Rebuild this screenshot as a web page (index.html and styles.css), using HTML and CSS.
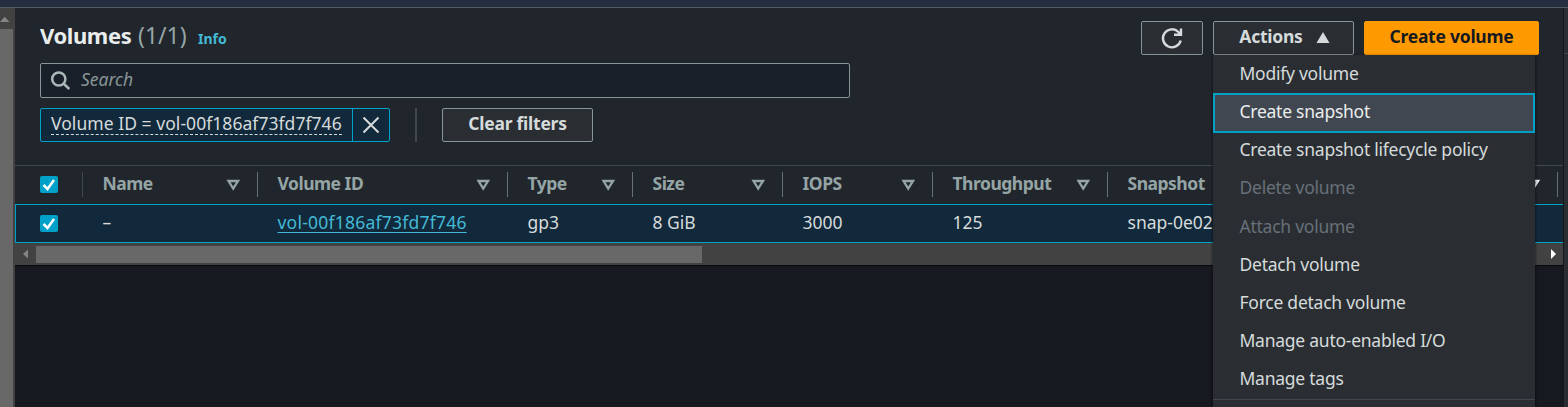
FILE: index.html
```html
<!DOCTYPE html>
<html lang="en">
<head>
<meta charset="utf-8">
<title>Volumes</title>
<link rel="stylesheet" href="styles.css">
</head>
<body>
<div class="topbar"></div>
<div class="app">
  <div class="vscroll">
    <svg class="vscroll-arrow" viewBox="0 0 13 21"><path d="M0 14h9.500L4.700 8.800z"/></svg>
    <div class="vscroll-thumb"></div>
  </div>
  <main class="panel">
    <section class="container">
      <header class="head">
        <h1 class="title"><span class="title-text">Volumes</span><span class="count">(1/1)</span><a class="info">Info</a></h1>
        <div class="buttons">
          <button class="btn refresh"><svg viewBox="0 0 24 24" width="24" height="24"><path d="M20.700 14.500A9 9 0 1 1 18.400 6L20.500 8.500M21 2.500V8.800H14" /></svg></button>
          <div class="dropdown">
            <button class="btn actions"><span>Actions</span><svg viewBox="0 0 14 12" width="14" height="12"><path d="M7 0L13.500 11H.5z"/></svg></button>
            <div class="menu">
              <div class="item">Modify volume</div>
              <div class="item active">Create snapshot</div>
              <div class="item">Create snapshot lifecycle policy</div>
              <div class="item disabled">Delete volume</div>
              <div class="item disabled">Attach volume</div>
              <div class="item">Detach volume</div>
              <div class="item">Force detach volume</div>
              <div class="item">Manage auto-enabled I/O</div>
              <div class="item">Manage tags</div>
              <div class="menu-rule"></div>
            </div>
          </div>
          <button class="btn primary"><span>Create volume</span></button>
        </div>
      </header>
      <div class="search">
        <svg viewBox="0 0 20 20" width="20" height="20"><circle cx="7.800" cy="8" r="6.600"/><path d="M12.500 12.500l5.800 5.500"/></svg>
        <span>Search</span>
      </div>
      <div class="filters">
        <div class="token">
          <div class="token-label"><span>Volume ID = vol-00f186af73fd7f746</span></div>
          <div class="token-close"><svg viewBox="0 0 18 18" width="18" height="18"><path d="M1.500 1.500l15 15M16.500 1.500l-15 15"/></svg></div>
        </div>
        <div class="divider"></div>
        <button class="btn clear"><span>Clear filters</span></button>
      </div>
      <div class="table">
        <div class="row header">
          <div class="cell check"><svg class="box" viewBox="0 0 18 17"><path d="M3.500 9l4 4L14 4"/></svg></div>
          <div class="cell dim"><span>Name</span><svg class="sort" viewBox="0 0 14 12"><path d="M2.500 2h9.500L7.200 9.600z"/></svg></div>
          <div class="cell"><span>Volume ID</span><svg class="sort" viewBox="0 0 14 12"><path d="M2.500 2h9.500L7.200 9.600z"/></svg></div>
          <div class="cell"><span>Type</span><svg class="sort" viewBox="0 0 14 12"><path d="M2.500 2h9.500L7.200 9.600z"/></svg></div>
          <div class="cell"><span>Size</span><svg class="sort" viewBox="0 0 14 12"><path d="M2.500 2h9.500L7.200 9.600z"/></svg></div>
          <div class="cell"><span>IOPS</span><svg class="sort" viewBox="0 0 14 12"><path d="M2.500 2h9.500L7.200 9.600z"/></svg></div>
          <div class="cell"><span>Throughput</span><svg class="sort" viewBox="0 0 14 12"><path d="M2.500 2h9.500L7.200 9.600z"/></svg></div>
          <div class="cell"><span>Snapshot</span><svg class="sort lit" viewBox="0 0 14 12"><path d="M2.500 2h9.500L7.200 9.600z"/></svg></div>
          <div class="cell"></div>
        </div>
        <div class="row body">
          <div class="cell check"><svg class="box" viewBox="0 0 18 17"><path d="M3.500 9l4 4L14 4"/></svg></div>
          <div class="cell"><span>–</span></div>
          <div class="cell"><a class="link">vol-00f186af73fd7f746</a></div>
          <div class="cell"><span>gp3</span></div>
          <div class="cell"><span>8 GiB</span></div>
          <div class="cell"><span>3000</span></div>
          <div class="cell"><span>125</span></div>
          <div class="cell"><span>snap-0e02c</span></div>
          <div class="cell"></div>
        </div>
      </div>
      <div class="hscroll">
        <svg viewBox="0 0 20 22" width="21" height="22"><path d="M12.500 6.500v9L7.500 11z"/></svg>
        <div class="hscroll-thumb"></div>
        <svg class="right" viewBox="0 0 20 22" width="20" height="22"><path d="M8 6v10l5-5z"/></svg>
      </div>
    </section>
  </main>
  <aside class="side"></aside>
</div>
</body>
</html>
```
FILE: styles.css
```css
* { box-sizing: border-box; }
body {
  margin: 0;
  width: 1568px;
  height: 407px;
  overflow: hidden;
  display: flex;
  flex-direction: column;
  background: #16191f;
  color: #d5dbdb;
  font: 17.5px/22px "Noto Sans", sans-serif;
}
svg { display: block; flex: none; }
span, a { white-space: nowrap; }
.topbar { height: 8px; flex: none; background: #232f3e; border-bottom: 1px solid #545b64; }
.app { flex: 1; display: flex; min-height: 0; }

.vscroll { width: 15px; flex: none; background: #424242; display: flex; flex-direction: column; }
.vscroll-arrow { width: 13px; height: 21px; fill: #858585; }
.vscroll-thumb { width: 13px; flex: 1; background: #686868; }

.panel { width: 1549px; flex: none; border-right: 1px solid #14171c; }
.container { height: 258px; background: #21252c; border-bottom: 1px solid #08090c; }
.head { height: 55px; padding: 13px 24px 0 25px; display: flex; justify-content: space-between; }
.title { margin: 1px 0 0; font-size: 22px; line-height: 26px; display: flex; align-items: baseline; }
.title-text { width: 98px; color: #eaeded; letter-spacing: -0.4px; }
.count { width: 60px; font-size: 23px; font-weight: 400; color: #95a5a6; }
.info { font-size: 14px; color: #44b9d6; }

.buttons { display: flex; gap: 10px; }
.btn {
  height: 34px;
  padding: 0;
  display: flex;
  align-items: center;
  justify-content: center;
  border: 1px solid #879596;
  border-radius: 2px;
  background: #2a2e33;
  color: #d5dbdb;
  font: bold 17.5px/20px "Noto Sans", sans-serif;
  letter-spacing: -0.25px;
}
.btn span { position: relative; top: -2px; }
.refresh { width: 62px; }
.refresh svg { fill: none; stroke: #d5dbdb; stroke-width: 2.400; }
.dropdown { position: relative; }
.actions { width: 141px; gap: 13px; padding-left: 2px; }
.actions svg { fill: #d5dbdb; }
.primary { width: 175px; border-color: #ff9900; background: #ff9900; color: #16191f; }

.menu {
  position: absolute;
  z-index: 2;
  left: 0;
  top: 34px;
  width: 322px;
  height: 360px;
  padding-top: 1px;
  background: #2a2e33;
  box-shadow: 0 1px 2px 1px rgba(0, 0, 0, .4);
  letter-spacing: -0.25px;
}
.item { height: 38.200px; line-height: 35px; padding-left: 26.500px; white-space: nowrap; }
.item.active {
  height: 40px;
  margin: -1px 0;
  padding-left: 24.500px;
  line-height: 33px;
  border: 2px solid #00a1c9;
  background: #414750;
  color: #eaeded;
}
.item.disabled { color: #687078; }
.menu-rule { margin-top: -1px; border-top: 1px solid #414750; }

.search {
  width: 810px;
  height: 35px;
  margin-left: 25px;
  padding-left: 10px;
  display: flex;
  align-items: center;
  gap: 10px;
  border: 1px solid #879596;
  border-radius: 2px;
  background: #1a2029;
  color: #879596;
  font-style: italic;
}
.search svg { fill: none; stroke: #aab7b8; stroke-width: 2.500; }
.search span { position: relative; top: -2px; }
.filters { height: 67px; padding: 10px 0 0 25px; display: flex; align-items: flex-start; }
.token { width: 350px; height: 34px; display: flex; border: 1px solid #00a1c9; border-radius: 2px; background: #12293b; }
.token-label { width: 312px; padding-left: 10px; border-right: 1px solid #00a1c9; letter-spacing: 0.050px; }
.token-label span { display: inline-block; height: 26px; line-height: 29px; border-bottom: 1px dashed #d5dbdb; }
.token-close { flex: 1; display: flex; align-items: center; justify-content: center; }
.token-close svg { fill: none; stroke: #d5dbdb; stroke-width: 2; }
.divider { width: 2px; height: 34px; margin: 0 25px; background: #414750; }
.clear { width: 151px; }

.row { display: grid; grid-template-columns: 67px 175px 250px 125px 150px 150px 175px 450px 10px; overflow: hidden; width: 1548px; }
.header { height: 39px; padding-top: 6px; border-top: 1px solid #414750; color: #95a5a6; font-weight: bold; letter-spacing: -0.5px; }
.header .cell { height: 25px; display: flex; align-items: center; justify-content: space-between; padding: 0 17px 0 19.500px; border-left: 1px solid #687078; }
.header .cell.dim { border-color: #414750; }
.header .check, .body .check { padding: 0 0 0 25px; border: 0; }
.header span { position: relative; top: -2px; }
.sort { width: 14px; height: 12px; fill: none; stroke: #95a5a6; stroke-width: 2.300; }
.sort.lit { stroke: #eaeded; }
.box { width: 18px; height: 17px; border-radius: 2px; background: #00a1c9; fill: none; stroke: #fff; stroke-width: 2.500; }
.body { height: 39px; border: 1px solid #00a1c9; border-right: 0; background: #12293b; }
.body .cell { height: 37px; display: flex; align-items: center; padding-left: 19.500px; }
.body .check { padding-left: 24px; }
.body span, .body a { position: relative; top: -2px; }
.link { color: #44b9d6; text-decoration: underline; text-underline-offset: 3px; letter-spacing: 0.230px; }

.hscroll { width: 1548px; height: 22px; background: #424242; display: flex; align-items: center; }
.hscroll svg { fill: #858585; }
.hscroll-thumb { width: 666px; height: 17px; background: #686868; }
.hscroll .right { margin-left: auto; fill: #fff; }
.side { width: 4px; flex: none; height: 399px; background: linear-gradient(#414750, #414750) 0 45px / 4px 1px no-repeat #2a2e33; }
```
